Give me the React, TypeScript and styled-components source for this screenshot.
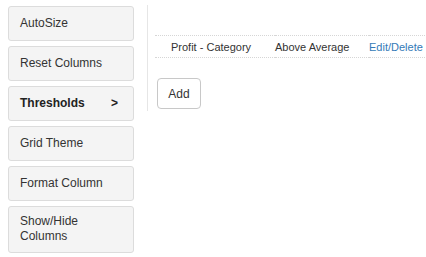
import styled, { createGlobalStyle } from "styled-components";

const GlobalStyle = createGlobalStyle`
  body {
    margin: 0;
    background: #fff;
    font-family: "Liberation Sans", Arial, sans-serif;
    font-size: 12px;
    color: #333;
  }
`;

const Page = styled.div`
  display: flex;
  align-items: flex-start;
  padding: 6px 0 0 8px;
  width: 426px;
  box-sizing: border-box;
  overflow: hidden;
`;

const Menu = styled.div`
  display: flex;
  flex-direction: column;
  gap: 5px;
  width: 126px;
  flex-shrink: 0;
`;

const MenuButton = styled.div<{ $active?: boolean }>`
  display: flex;
  align-items: center;
  justify-content: space-between;
  box-sizing: border-box;
  min-height: 35px;
  padding: 7px 15px 8px 11px;
  line-height: 15px;
  background: #f4f4f4;
  border: 1px solid #dcdcdc;
  border-radius: 3px;
  font-weight: ${(p) => (p.$active ? "bold" : "normal")};
  color: ${(p) => (p.$active ? "#222" : "#333")};
`;

const Panel = styled.div`
  margin: -1px 0 0 13px;
  border-left: 1px solid #e6e6e6;
  padding: 30px 0 0 7px;
  height: 76px;
  flex: 1;
  min-width: 0;
  overflow: hidden;
`;

const Table = styled.table`
  border-collapse: collapse;
  table-layout: fixed;
  width: 294px;
  white-space: nowrap;
  font-size: 11px;
`;

const Cell = styled.td<{ $w: number; $pl: number }>`
  box-sizing: border-box;
  width: ${(p) => p.$w}px;
  height: 22px;
  padding: 0 0 0 ${(p) => p.$pl}px;
  border-top: 1px dotted #d6d6d6;
  border-bottom: 1px dotted #d6d6d6;
`;

const Link = styled.a`
  color: #337ab7;
  text-decoration: none;
`;

const AddButton = styled.button`
  display: block;
  margin: 20px 0 0 2px;
  width: 44px;
  height: 31px;
  background: #fff;
  border: 1px solid #c8c8c8;
  border-radius: 4px;
  font-family: "Liberation Sans", Arial, sans-serif;
  font-size: 12px;
  color: #333;
  padding: 0;
`;

const items = ["AutoSize", "Reset Columns", "Thresholds", "Grid Theme", "Format Column", "Show/Hide Columns"];

export default function App() {
  return (
    <>
      <GlobalStyle />
      <Page>
        <Menu>
          {items.map((label) => (
            <MenuButton key={label} $active={label === "Thresholds"}>
              <span>{label}</span>
              {label === "Thresholds" && <span>&gt;</span>}
            </MenuButton>
          ))}
        </Menu>
        <Panel>
          <Table>
            <tbody>
              <tr>
                <Cell $w={120} $pl={16}>Profit - Category</Cell>
                <Cell $w={94} $pl={0}>Above Average</Cell>
                <Cell $w={80} $pl={0}>
                  <Link href="#">Edit/Delete</Link>
                </Cell>
              </tr>
            </tbody>
          </Table>
          <AddButton>Add</AddButton>
        </Panel>
      </Page>
    </>
  );
}
